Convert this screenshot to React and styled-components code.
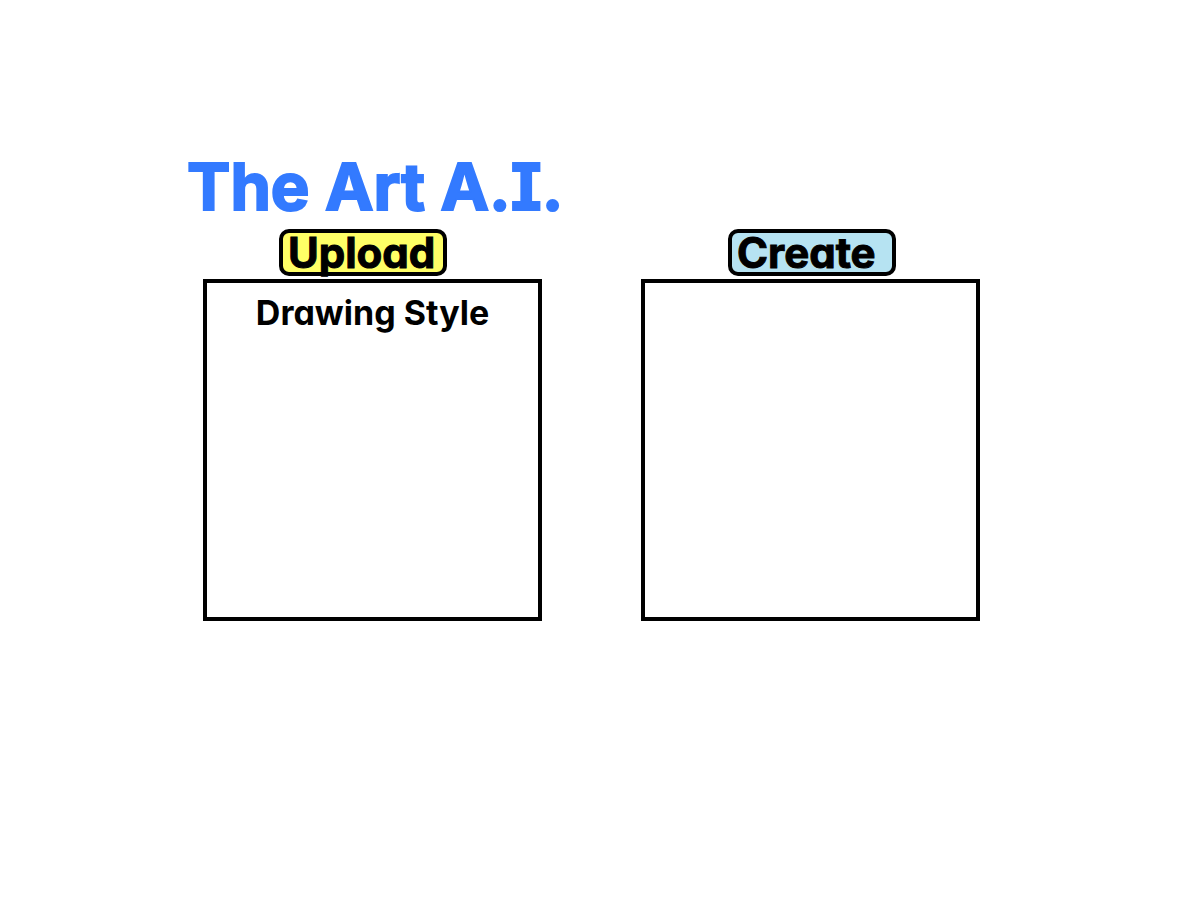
import React from "react";
import styled, { createGlobalStyle } from "styled-components";

const GlobalStyle = createGlobalStyle`
  *, *::before, *::after { box-sizing: border-box; }
  body {
    margin: 0;
    background: #fff;
    color: #000;
    font-family: Inter, "Open Sans", sans-serif;
    font-feature-settings: "cv11" 1;
  }
`;

const Page = styled.main`
  padding: 151px 220px 40px 203px;
`;

const Title = styled.h1`
  margin: 0 0 6px -16px;
  color: #337aff;
  font-size: 65px;
  font-weight: 700;
  line-height: 72px;
  white-space: nowrap;
  -webkit-text-stroke: 2px currentColor;
`;

const Capital = styled.span`
  font-feature-settings: "cv08" 1;
`;

const Workspace = styled.div`
  display: grid;
  grid-template-columns: repeat(auto-fit, minmax(300px, 1fr));
  gap: 40px 99px;
`;

const Column = styled.section`
  display: flex;
  flex-direction: column;
  align-items: center;
  gap: 3px;
`;

const Action = styled.button`
  width: 168px;
  height: 47px;
  margin: 0 ${(p) => (p.$side === "left" ? "19px 0 0" : "0 0 3px")};
  padding: 0 0 0 5px;
  border: 4px solid #000;
  border-radius: 10px;
  background: ${(p) => p.$color};
  color: #000;
  font: inherit;
  font-feature-settings: inherit;
  font-size: 42px;
  font-weight: 700;
  line-height: 39px;
  text-align: left;
  white-space: nowrap;
  cursor: pointer;
  -webkit-text-stroke: 1px currentColor;
`;

const Panel = styled.div`
  width: 100%;
  min-height: 342px;
  padding: 10px 8px;
  border: 4px solid #000;
  background: #fff;
`;

const PanelTitle = styled.h2`
  margin: 0;
  font-size: 34px;
  font-weight: 700;
  line-height: 40px;
  text-align: center;
`;

export default function App() {
  return (
    <>
      <GlobalStyle />
      <Page>
        <Title>
          The Art A.<Capital>I</Capital>.
        </Title>
        <Workspace>
          <Column>
            <Action type="button" $color="#ffff66" $side="left">Upload</Action>
            <Panel>
              <PanelTitle>Drawing Style</PanelTitle>
            </Panel>
          </Column>
          <Column>
            <Action type="button" $color="#b6e3f2" $side="right">Create</Action>
            <Panel />
          </Column>
        </Workspace>
      </Page>
    </>
  );
}
